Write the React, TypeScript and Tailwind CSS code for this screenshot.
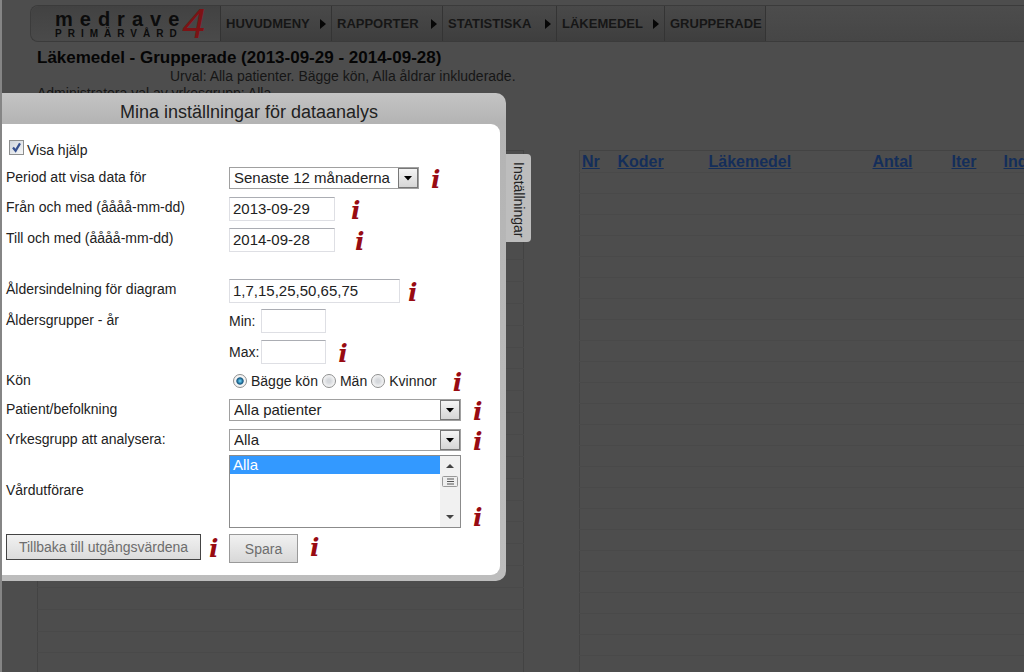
import React from 'react';

const NAV = [
  { label: 'HUVUDMENY', arrow: true, width: 'w-[111px]' },
  { label: 'RAPPORTER', arrow: true, width: 'w-[111px]' },
  { label: 'STATISTISKA', arrow: true, width: 'w-[114px]' },
  { label: 'LÄKEMEDEL', arrow: true, width: 'w-[108px]' },
  { label: 'GRUPPERADE', arrow: false, width: 'w-[101px]' },
];

const COLUMNS = [
  { label: 'Nr', width: 'w-[36px]' },
  { label: 'Koder', width: 'w-[91px]' },
  { label: 'Läkemedel', width: 'w-[164px]' },
  { label: 'Antal', width: 'w-[79px]' },
  { label: 'Iter', width: 'w-[52px]' },
  { label: 'Ind', width: 'w-[80px]' },
];

const ROWS = Array.from({ length: 26 }, (_, i) => i);

const InfoMark = ({ className = '' }: { className?: string }) => (
  <span
    className={`pt-1 font-['DejaVu_Serif',serif] text-[25px] leading-5 font-bold italic text-[#980b12] select-none ${className}`}
  >
    i
  </span>
);

const Row = ({ label, htmlFor, className = 'h-[30px]', children }: {
  label: string;
  htmlFor?: string;
  className?: string;
  children: React.ReactNode;
}) => (
  <div className={`flex items-center ${className}`}>
    <label htmlFor={htmlFor} className="w-[223px] shrink-0 pb-[3px]">{label}</label>
    {children}
  </div>
);

const Dropdown = ({ id, width, children }: {
  id: string;
  width: string;
  children: React.ReactNode;
}) => (
  <div className={`relative h-[22px] border border-[#a0a0a0] bg-white ${width}`}>
    <select id={id} className="block h-full w-full appearance-none bg-transparent pl-1 text-[15px] leading-5 outline-none">
      {children}
    </select>
    <span className="pointer-events-none absolute inset-y-0 right-0 flex w-5 items-center justify-center border border-[#777] bg-linear-to-b from-[#f4f4f4] to-[#d6d6d6]">
      <svg width="8" height="5" viewBox="0 0 8 5"><path d="M0 0h8L4 4.5z" fill="#000" /></svg>
    </span>
  </div>
);

const TextBox = ({ id, width, value = '' }: { id: string; width: string; value?: string }) => (
  <input
    id={id}
    type="text"
    defaultValue={value}
    className={`h-6 border border-[#dedfe4] border-t-[#abadb3] bg-white px-[3px] text-[15px] outline-none ${width}`}
  />
);

const Radio = ({ label, checked = false }: { label: string; checked?: boolean }) => (
  <label className="flex items-center gap-1">
    <input
      type="radio"
      name="kon"
      defaultChecked={checked}
      className="h-[14px] w-[14px] appearance-none rounded-full border border-[#8e8f8f] bg-[radial-gradient(circle,#d5d8dc_20%,#f8f8f8_75%)] checked:bg-[radial-gradient(circle,#5fc2e8_8%,#12527c_38%,#f4f4f4_48%)]"
    />
    {label}
  </label>
);

const Settings = () => (
  <form className="w-[504px] rounded-r-[10px] bg-linear-to-b from-[#c4c4c4] via-[#b4b4b4] via-6% to-[#bdbdbd] pr-[6px] pb-[6px] text-sm text-[#222]">
    <h2 className="h-[31px] pt-[7px] pr-1 text-center text-lg leading-6">Mina inställningar för dataanalys</h2>
    <div className="rounded-r-[9px] bg-white pt-[11px] pb-3 pl-1">
      <label className="flex h-7 items-center gap-[3px] pl-[3px]">
        <span className="relative mb-1 flex h-[15px] w-[15px]">
          <input
            type="checkbox"
            defaultChecked
            className="peer h-full w-full appearance-none border border-[#8e8f8f] bg-linear-to-br from-[#cfd5dd] to-[#f7f7f7]"
          />
          <svg className="pointer-events-none absolute inset-0 hidden peer-checked:block" width="15" height="15" viewBox="0 0 15 15">
            <path d="M4 7.5l2.6 3.3L11 3.4" fill="none" stroke="#36508f" strokeWidth="2.2" />
          </svg>
        </span>
        <span className="pt-[2px]">Visa hjälp</span>
      </label>

      <Row label="Period att visa data för" htmlFor="period">
        <Dropdown id="period" width="w-[190px]">
          <option>Senaste 12 månaderna</option>
        </Dropdown>
        <InfoMark className="ml-3" />
      </Row>
      <Row label="Från och med (åååå-mm-dd)" htmlFor="from" className="h-[31px]">
        <TextBox id="from" width="w-[106px]" value="2013-09-29" />
        <InfoMark className="ml-4" />
      </Row>
      <Row label="Till och med (åååå-mm-dd)" htmlFor="to" className="h-[31px]">
        <TextBox id="to" width="w-[106px]" value="2014-09-28" />
        <InfoMark className="ml-5" />
      </Row>

      <Row label="Åldersindelning för diagram" htmlFor="ages" className="mt-5 h-[31px]">
        <TextBox id="ages" width="w-[171px]" value="1,7,15,25,50,65,75" />
        <InfoMark className="ml-2" />
      </Row>
      <Row label="Åldersgrupper - år" htmlFor="min">
        <span className="mr-[6px]">Min:</span>
        <TextBox id="min" width="w-[65px]" />
      </Row>
      <div className="flex h-[31px] items-center pl-[223px]">
        <label htmlFor="max" className="mr-[2px]">Max:</label>
        <TextBox id="max" width="w-[65px]" />
        <InfoMark className="ml-3" />
      </div>
      <Row label="Kön" className="h-7">
        <div className="flex items-center gap-1 pl-1">
          <Radio label="Bägge kön" checked />
          <Radio label="Män" />
          <Radio label="Kvinnor" />
        </div>
        <InfoMark className="ml-4" />
      </Row>
      <Row label="Patient/befolkning" htmlFor="patient">
        <Dropdown id="patient" width="w-[232px]">
          <option>Alla patienter</option>
        </Dropdown>
        <InfoMark className="ml-3" />
      </Row>
      <Row label="Yrkesgrupp att analysera:" htmlFor="group">
        <Dropdown id="group" width="w-[232px]">
          <option>Alla</option>
        </Dropdown>
        <InfoMark className="ml-3" />
      </Row>
      <Row label="Vårdutförare" htmlFor="provider" className="h-[73px]">
        <div className="flex h-full w-[232px] border border-[#8b8b8b] bg-white">
          <select
            id="provider"
            size={4}
            defaultValue="Alla"
            className="h-full min-w-0 flex-1 appearance-none overflow-hidden text-[15px] leading-[18px] outline-none"
          >
            <option value="Alla" className="h-[18px] bg-[#3399ff] px-[3px] py-0 text-white checked:bg-[linear-gradient(#3399ff,#3399ff)]">Alla</option>
          </select>
          <div className="flex w-5 flex-col items-center justify-between bg-[#f1f1f1] py-2">
            <div className="flex flex-col items-center gap-2">
              <svg width="8" height="4" viewBox="0 0 8 4"><path d="M0 4h8L4 0z" fill="#444" /></svg>
              <svg width="16" height="11" viewBox="0 0 16 11">
                <rect x=".5" y=".5" width="15" height="10" rx="1" fill="#eee" stroke="#999" />
                <path d="M5 3h7M5 5.5h7M5 8h7" stroke="#555" />
              </svg>
            </div>
            <svg width="8" height="4" viewBox="0 0 8 4"><path d="M0 0h8L4 4z" fill="#444" /></svg>
          </div>
        </div>
        <InfoMark className="ml-3 self-end" />
      </Row>

      <div className="mt-[6px] flex items-start">
        <div className="flex w-[223px] items-center">
          <button type="button" className="h-[26px] w-[195px] border border-[#444] bg-linear-to-b from-[#f1f1f1] to-[#dcdcdc] text-[#6d6d6d]">
            Tillbaka till utgångsvärdena
          </button>
          <InfoMark className="ml-2" />
        </div>
        <button type="button" className="h-[29px] w-[69px] border border-[#999] bg-linear-to-b from-[#f1f1f1] to-[#d8d8d8] text-[#6d6d6d]">
          Spara
        </button>
        <InfoMark className="ml-3" />
      </div>
    </div>
  </form>
);

export default function App() {
  return (
    <div className="relative h-screen overflow-hidden border-l-2 border-[#858585] bg-[#4d4d4d] font-['Liberation_Sans',Arial,sans-serif] text-[#161616]">
      <header className="mt-[5px] ml-7 flex h-[37px] rounded-l-lg border border-r-0 border-[#3b3b3b] bg-linear-to-b from-[#4c4c4c] to-[#464646]">
        <div className="flex w-[190px] items-start rounded-l-lg border-r border-[#333] bg-linear-to-b from-[#424242] to-[#4a4a4a] pl-6">
          <div className="pt-[3px] font-bold text-[#0c0c0c]">
            <div className="text-xl leading-5 tracking-[7px]">medrave</div>
            <div className="text-[10px] leading-[10px] tracking-[6px]">PRIMÄRVÅRD</div>
          </div>
          <span className="-ml-1 text-[42px] leading-9 italic text-[#7c1315]">4</span>
        </div>
        <nav className="flex bg-linear-to-b from-[#494949] to-[#3e3e3e]">
          {NAV.map((item) => (
            <a
              key={item.label}
              href="#"
              className={`flex items-center justify-between border-r border-[#343434] px-[5px] text-[13px] font-bold ${item.width}`}
            >
              {item.label}
              {item.arrow && (
                <svg width="6" height="10" viewBox="0 0 6 10"><path d="M0 0l6 5-6 5z" fill="#060606" /></svg>
              )}
            </a>
          ))}
        </nav>
      </header>

      <div className="pt-[6px] pl-[35px]">
        <h1 className="text-[17px] leading-5 font-bold text-[#050505]">Läkemedel - Grupperade (2013-09-29 - 2014-09-28)</h1>
        <p className="pl-[133px] text-sm leading-[17px]">Urval: Alla patienter. Bägge kön, Alla åldrar inkluderade.</p>
        <p className="text-sm leading-4">Administratora val av yrkesgrupp: Alla</p>
      </div>

      <div className="mt-[49px] flex gap-[55px] pl-[35px]">
        <table className="w-[487px] shrink-0 border-collapse border border-[#434343]">
          <tbody>
            {ROWS.map((row) => (
              <tr key={row} className="h-[21px] border-b border-[#494949]"><td /></tr>
            ))}
          </tbody>
        </table>
        <div className="min-w-0 flex-1 overflow-hidden">
          <table className="w-[502px] table-fixed border-collapse border border-[#434343]">
            <thead>
              <tr className="h-[22px] border-b border-[#494949]">
                {COLUMNS.map((col) => (
                  <th key={col.label} className={`p-0 pl-[2px] text-left text-base leading-5 ${col.width}`}>
                    <a href="#" className="text-[#142e5a] underline">{col.label}</a>
                  </th>
                ))}
              </tr>
            </thead>
            <tbody>
              {ROWS.map((row) => (
                <tr key={row} className="h-[21px] border-b border-[#494949]"><td colSpan={6} /></tr>
              ))}
            </tbody>
          </table>
        </div>
      </div>

      {/* Slide-out settings panel */}
      <div className="absolute top-[93px] left-0 flex items-start">
        <Settings />
        <button
          type="button"
          className="mt-[61px] flex h-[88px] w-[25px] items-center justify-center rounded-r-[4px] bg-[#bdbdbd] pt-1 text-sm text-[#222] [writing-mode:vertical-rl]"
        >
          Inställningar
        </button>
      </div>
    </div>
  );
}
